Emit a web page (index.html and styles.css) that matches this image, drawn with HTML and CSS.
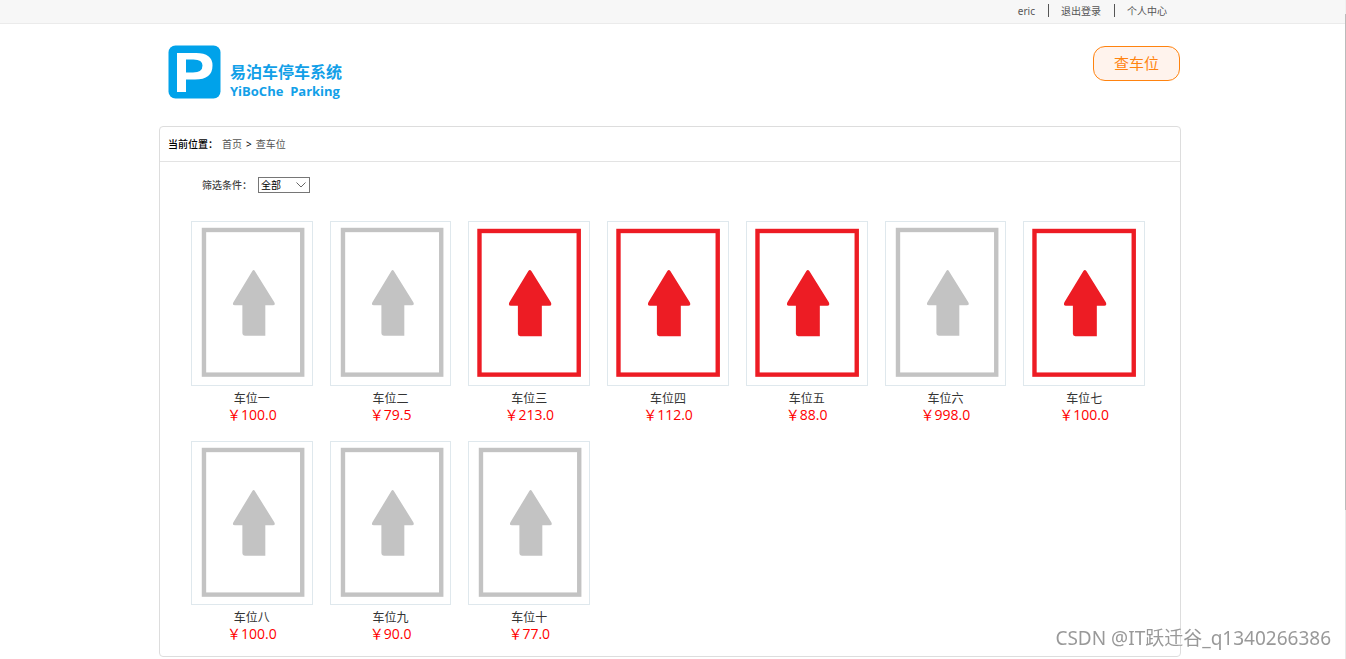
FILE: index.html
```html
<!DOCTYPE html>
<html lang="zh-CN">
<head>
<meta charset="utf-8">
<title>易泊车停车系统</title>
<link rel="stylesheet" href="styles.css">
</head>
<body>
<svg class="defs" aria-hidden="true">
  <symbol id="free" viewBox="0 0 120 163">
    <rect x="12" y="8" width="98.500" height="145" fill="none" stroke="currentColor" stroke-width="4.400"/>
    <path d="M60.500 49Q61.800 47 63 49L82.500 80.500Q84 83.500 81 83.500H73.500V114H53Q50.500 114 50.500 111.500V83.500H43Q40 83.500 41.500 80.500Z" fill="currentColor"/>
  </symbol>
  <symbol id="taken" viewBox="0 0 120 163">
    <rect x="10.500" y="9" width="99.500" height="144" fill="none" stroke="currentColor" stroke-width="4.400"/>
    <path d="M59.500 49Q61 47 62.500 49L82 80.500Q83.500 84 80.500 84H73V114.500H51.500Q49 114.500 49 112V84H42Q39 84 40.500 80.500Z" fill="currentColor"/>
  </symbol>
</svg>
<nav class="topbar">
  <div class="container topbar-links">
    <a href="#">eric</a>
    <a href="#">退出登录</a>
    <a href="#">个人中心</a>
  </div>
</nav>
<header class="container header">
  <a class="logo" href="#">
    <svg class="logo-mark" viewBox="0 0 53 54" aria-hidden="true">
      <rect x="0.500" y="0.500" width="52" height="53" rx="7" fill="#00a2ea"/>
      <path fill="#fff" fill-rule="evenodd" d="M9 8H28Q44.500 8 44.500 20.500Q44.500 34.500 27 34.500H18V47H9ZM18 14.500V27.500H25Q34.500 27.500 34.500 20.500Q34.500 14.500 25.500 14.500Z"/>
    </svg>
    <span class="logo-text">
      <span class="logo-name">易泊车停车系统</span>
      <span class="logo-latin">YiBoChe&nbsp; Parking</span>
    </span>
  </a>
  <a class="find" href="#">查车位</a>
</header>
<main class="container panel">
  <div class="crumbs"><b>当前位置：</b><a href="#">首页</a><span>&gt;</span><a href="#">查车位</a></div>
  <div class="filter">
    <label for="status">筛选条件：</label>
    <span class="select-wrap">
      <select id="status"><option>全部</option></select>
      <svg class="chevron" viewBox="0 0 10 6" aria-hidden="true"><path d="M0.500 0.500L5 5L9.500 0.500" fill="none" stroke="#666"/></svg>
    </span>
  </div>
  <ul class="spaces">
    <li class="space"><a class="slot" href="#"><svg viewBox="0 0 120 163"><use href="#free"/></svg></a><span class="name">车位一</span><span class="price">￥100.0</span></li>
    <li class="space"><a class="slot" href="#"><svg viewBox="0 0 120 163"><use href="#free"/></svg></a><span class="name">车位二</span><span class="price">￥79.5</span></li>
    <li class="space"><a class="slot taken" href="#"><svg viewBox="0 0 120 163"><use href="#taken"/></svg></a><span class="name">车位三</span><span class="price">￥213.0</span></li>
    <li class="space"><a class="slot taken" href="#"><svg viewBox="0 0 120 163"><use href="#taken"/></svg></a><span class="name">车位四</span><span class="price">￥112.0</span></li>
    <li class="space"><a class="slot taken" href="#"><svg viewBox="0 0 120 163"><use href="#taken"/></svg></a><span class="name">车位五</span><span class="price">￥88.0</span></li>
    <li class="space"><a class="slot" href="#"><svg viewBox="0 0 120 163"><use href="#free"/></svg></a><span class="name">车位六</span><span class="price">￥998.0</span></li>
    <li class="space"><a class="slot taken" href="#"><svg viewBox="0 0 120 163"><use href="#taken"/></svg></a><span class="name">车位七</span><span class="price">￥100.0</span></li>
    <li class="space"><a class="slot" href="#"><svg viewBox="0 0 120 163"><use href="#free"/></svg></a><span class="name">车位八</span><span class="price">￥100.0</span></li>
    <li class="space"><a class="slot" href="#"><svg viewBox="0 0 120 163"><use href="#free"/></svg></a><span class="name">车位九</span><span class="price">￥90.0</span></li>
    <li class="space"><a class="slot" href="#"><svg viewBox="0 0 120 163"><use href="#free"/></svg></a><span class="name">车位十</span><span class="price">￥77.0</span></li>
  </ul>
</main>
<div class="scroll-edge" aria-hidden="true"></div>
<div class="watermark">CSDN @IT跃迁谷_q1340266386</div>
</body>
</html>
```

FILE: styles.css
```css
* { box-sizing: border-box; }
body {
  margin: 0;
  background: #fff;
  color: #000;
  font: 10px/16px "Noto Sans", "Noto Sans CJK SC", sans-serif;
}
a { color: #555; text-decoration: none; }
.defs { position: absolute; width: 0; height: 0; }
.container {
  width: calc(100% - 6px);
  max-width: 1022px;
  margin-left: max(0px, calc(50% - 514px));
}
.topbar { background: #f7f7f7; border-bottom: 1px solid #ebebeb; }
.topbar-links {
  display: flex;
  justify-content: flex-end;
  padding: 4px 1px 6px 0;
}
.topbar-links a { padding: 1px 13px 0 12px; line-height: 12px; }
.topbar-links a + a { border-left: 1px solid #555; }
.header {
  display: flex;
  justify-content: space-between;
  align-items: flex-start;
  padding: 21px 1px 26px 9px;
}
.logo { display: flex; gap: 9px; }
.logo-mark { width: 53px; height: 54px; }
.logo-text { display: flex; flex-direction: column; padding-top: 17px; color: #12a0e8; font-weight: 700; }
.logo-name { font-size: 16px; line-height: 20px; }
.logo-latin { font-family: "Open Sans", sans-serif; font-size: 13px; line-height: 18px; }
.find {
  margin-top: 1px;
  padding: 0 20px;
  border: 1px solid #ff830f;
  border-radius: 12px;
  background: #fff3ed;
  color: #ff830f;
  font-size: 15px;
  line-height: 33px;
}
.panel { border: 1px solid #ddd; border-radius: 4px; }
.crumbs {
  display: flex;
  gap: 4px;
  padding: 9px 8px;
  border-bottom: 1px solid #e3e3e3;
}
.crumbs b { font-weight: 500; }
.filter {
  display: flex;
  align-items: center;
  gap: 6px;
  padding: 15px 42px 0;
}
.filter label { color: #444; font-weight: 500; }
.select-wrap { position: relative; display: flex; }
.select-wrap select {
  appearance: none;
  width: 52px;
  height: 16px;
  padding: 0 0 0 2px;
  border: 1px solid #767676;
  border-radius: 0;
  background: #fff;
  color: #000;
  font: inherit;
  line-height: 14px;
}
.chevron { position: absolute; right: 4px; top: 5px; width: 10px; height: 6px; pointer-events: none; }
.spaces {
  display: grid;
  grid-template-columns: repeat(7, 1fr);
  gap: 18px 17px;
  margin: 0;
  padding: 28px 35px 14px 31px;
  list-style: none;
}
.space { display: flex; flex-direction: column; text-align: center; }
.slot { display: block; border: 1px solid #dfe8ed; color: #c3c3c3; }
.slot.taken { color: #ed1c24; }
.slot svg { display: block; width: 100%; }
.name { margin-top: 4px; color: #333; font-size: 12px; line-height: 17px; }
.price { color: #f00; font-family: "Open Sans", "Noto Sans CJK SC", sans-serif; font-size: 14px; line-height: 16px; }
.scroll-edge {
  position: absolute;
  top: 0;
  right: 0;
  width: 1px;
  height: 100%;
  background: linear-gradient(#f0f0f0 14px, #bbb 14px 510px, #e8e8e8 510px);
}
.watermark {
  position: fixed;
  right: 15px;
  bottom: 8px;
  color: #999;
  font-size: 19px;
  line-height: 26px;
  text-shadow: -1px -1px 0 #fff;
}
```
